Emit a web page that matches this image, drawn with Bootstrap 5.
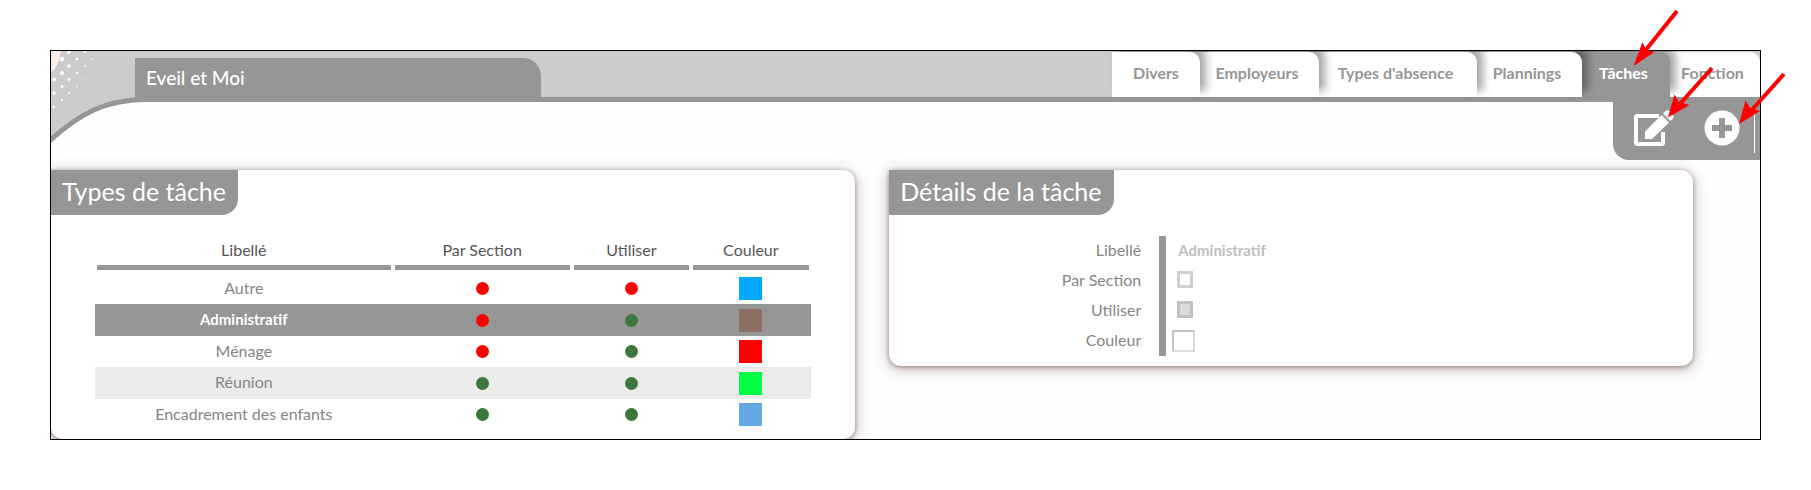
<!DOCTYPE html>
<html lang="fr">
<head>
<meta charset="utf-8">
<meta name="viewport" content="width=device-width, initial-scale=1">
<title>Eveil et Moi - Tâches</title>
<link href="https://cdn.jsdelivr.net/npm/bootstrap@5.3.0/dist/css/bootstrap.min.css" rel="stylesheet">
<style>
:root { --grey: #969696; }
body { font-family: Lato, "Liberation Sans", sans-serif; font-size: 16px; line-height: 24px; color: #858585; background: #fff; }
.app-frame { margin: 50px; border: 1px solid #000; background: #fefefe; }
.app-header { height: 51px; background: #ccc; border-bottom: 5px solid var(--grey); }
.header-art { top: 0; left: 0; width: 96px; height: 96px; }
.site-title { width: 406px; height: 44px; margin: 7px 0 0 84px; padding: 6px 11px; border-radius: 0 18px 0 0; background: var(--grey); color: #fff; font-size: 19px; line-height: 28px; font-weight: 500; }
.tab-strip { padding-top: 1px; }
.tab-item { position: relative; height: 45px; margin-left: -12px; padding: 9px 5px 0 12px; text-align: center; border-radius: 0 10px 0 0; background: #fff; box-shadow: 6px -6px 8px rgba(0,0,0,.35); color: var(--grey); font-size: 16px; font-weight: 700; text-decoration: none; white-space: nowrap; }
.tab-item:first-child { margin-left: 0; padding-left: 5px; }
.tab-item:last-child { box-shadow: none; }
.tab-item.active { background: var(--grey); color: #fff; }
.tab-item:nth-child(1) { z-index: 6; min-width: 88px; }
.tab-item:nth-child(2) { z-index: 5; min-width: 131px; }
.tab-item:nth-child(3) { z-index: 4; min-width: 170px; }
.tab-item:nth-child(4) { z-index: 3; min-width: 117px; }
.tab-item:nth-child(5) { z-index: 2; min-width: 100px; }
.tab-item:nth-child(6) { z-index: 1; min-width: 102px; }
.tool-box { height: 58px; width: 147px; padding: 8px 5px 0 20px; border-radius: 0 0 0 16px; background: var(--grey); }
.tool-btn { border: 0; padding: 0; background: none; line-height: 0; }
.tool-sep { width: 1px; height: 41px; margin: 2px 0 0 14px; background: #fff; }
.panels { padding-top: 10px; gap: 2%; }
.panel { width: 47.05%; border-radius: 0 12px 12px 12px; background: #fff; box-shadow: 0 3px 16px rgba(80,40,30,.3), 0 1px 5px rgba(80,40,30,.5); }
.panel-title { display: inline-block; margin: 0; height: 45px; padding: 0 12px 0 11px; border-radius: 0 0 16px 0; background: var(--grey); color: #fff; font-size: 25px; line-height: 43px; font-weight: 400; vertical-align: top; }
.task-table { width: 89%; margin: 21px 0 9px 44px; table-layout: fixed; text-align: center; }
.task-table th { padding: 0 2px; font-weight: 400; color: #555; height: 37px; vertical-align: top; }
.task-table th span { display: block; height: 34px; padding-top: 2px; border-bottom: 5px solid var(--grey); }
.task-table td { height: 31px; padding: 0; vertical-align: middle; }
.task-table td:first-child { padding-bottom: 2px; }
.task-table tr:nth-child(even) td { height: 32px; background: #ebebeb; }
.task-table tr.chosen:nth-child(even) td { background: var(--grey); color: #fff; font-size: 15px; font-weight: 700; }
.dot, .swatch { display: block; margin: 0 auto; }
.dot { width: 13px; height: 13px; border-radius: 50%; }
.dot-no { background: #f00; }
.dot-yes { background: #3c783c; }
.swatch { width: 23px; height: 23px; }
.details { margin: 21px 0 10px; grid-template-columns: 270px 1fr; }
.detail-labels { border-right: 7px solid var(--grey); margin-right: -7px; padding-right: 18px; text-align: right; }
.detail-labels label { display: block; height: 30px; line-height: 28px; }
.detail-values { padding-left: 13px; }
.detail-values div { height: 30px; display: flex; align-items: center; }
.detail-values input { appearance: none; margin: 0; border-radius: 0; }
.detail-values .field-text { width: 200px; border: 0; padding: 0 0 2px; margin-left: 6px; height: 24px; background: none; color: #bebebe; font-size: 15px; font-weight: 700; }
.detail-values .field-check { width: 16px; height: 17px; margin: 0 0 4px 5px; border: 3px solid #d0d0d0; background: #fff; }
.detail-values .field-check:checked { border-color: #c1c1c1; background: #dadada; }
.detail-values .field-color { width: 23px; height: 22px; padding: 0; border: 2px solid; border-color: #c3c3c3 #dadada #dadada #c3c3c3; background: #fff; }
.arrows { top: 0; right: 0; width: 211px; height: 180px; z-index: 20; pointer-events: none; }
</style>
</head>
<body class="position-relative">
<div class="app-frame position-relative overflow-hidden">
  <header class="app-header d-flex justify-content-between">
    <svg class="header-art position-absolute" viewBox="0 0 96 96" aria-hidden="true">
      <path d="M0 0H84V48Q46 50 0 88Z" fill="#ccc"/>
      <path d="M0 0H10Q8 15 0 22Z" fill="#fbeee8"/>
      <g fill="#fff">
        <circle cx="18" cy="1" r="2"/><circle cx="34" cy="1" r="1.3"/>
        <circle cx="11" cy="8" r="2.2"/><circle cx="26" cy="8" r="1.6"/><circle cx="41.5" cy="8" r=".8"/>
        <circle cx="18" cy="15" r="1.8"/><circle cx="34" cy="15" r=".9"/>
        <circle cx="11" cy="22" r="1.9"/><circle cx="26" cy="22" r="1.2"/>
        <circle cx="3" cy="28.5" r="2"/><circle cx="18" cy="28.5" r="1.4"/><circle cx="34" cy="28.5" r=".6"/>
        <circle cx="11" cy="35.5" r="1.5"/><circle cx="26" cy="35.5" r=".8"/>
        <circle cx="3" cy="42" r="1.7"/><circle cx="18" cy="42" r="1"/>
        <circle cx="11" cy="49" r="1.1"/><circle cx="3" cy="56" r="1.2"/>
      </g>
      <path d="M0 88C30 62 54 49 94 48.5V54H96V96H0Z" fill="#fefefe"/>
      <path d="M-3 91L0 88.5C30 62 54 49 94 48.5" fill="none" stroke="#969696" stroke-width="5"/>
    </svg>
    <div class="site-title position-relative">Eveil et Moi</div>
    <nav class="tab-strip d-flex">
      <a class="tab-item" href="#">Divers</a>
      <a class="tab-item" href="#">Employeurs</a>
      <a class="tab-item" href="#">Types d'absence</a>
      <a class="tab-item" href="#">Plannings</a>
      <a class="tab-item active" href="#" aria-current="page">Tâches</a>
      <a class="tab-item" href="#">Fonction</a>
    </nav>
  </header>
  <div class="d-flex justify-content-end">
    <div class="tool-box d-flex align-items-start">
      <button class="tool-btn" type="button" aria-label="Modifier">
        <svg width="42" height="38" viewBox="0 0 42 38">
          <path d="M26 6H4.500Q3 6 3 7.500V32.500Q3 34 4.500 34H28.500Q30 34 30 32.500V22" fill="none" stroke="#fff" stroke-width="4"/>
          <path d="M12 29V21.500L28.500 5L36 12.500L19 29Z" fill="#fff"/>
          <path d="M30 3.500L32.500 1Q34.500 -.5 36.500 1.500L39.500 4.500Q41.500 6.500 40 8.500L37.500 11Z" fill="#fff"/>
          <path d="M11 22V30H19" fill="none" stroke="#969696" stroke-width="1.500"/>
        </svg>
      </button>
      <button class="tool-btn ms-auto" type="button" aria-label="Ajouter">
        <svg width="36" height="36" viewBox="0 0 36 36">
          <circle cx="18" cy="18" r="17.5" fill="#fff"/>
          <path d="M18 8V28M8 18H28" stroke="#969696" stroke-width="6"/>
        </svg>
      </button>
      <span class="tool-sep"></span>
    </div>
  </div>
  <main class="panels d-flex align-items-start">
    <section class="panel">
      <h2 class="panel-title">Types de tâche</h2>
      <table class="task-table">
        <colgroup><col style="width:41.6%"><col style="width:25%"><col style="width:16.7%"><col style="width:16.7%"></colgroup>
        <thead>
          <tr><th><span>Libellé</span></th><th><span>Par Section</span></th><th><span>Utiliser</span></th><th><span>Couleur</span></th></tr>
        </thead>
        <tbody>
          <tr><td>Autre</td><td><i class="dot dot-no"></i></td><td><i class="dot dot-no"></i></td><td><i class="swatch" style="background:#00a8ff"></i></td></tr>
          <tr class="chosen"><td>Administratif</td><td><i class="dot dot-no"></i></td><td><i class="dot dot-yes"></i></td><td><i class="swatch" style="background:#8d6e63"></i></td></tr>
          <tr><td>Ménage</td><td><i class="dot dot-no"></i></td><td><i class="dot dot-yes"></i></td><td><i class="swatch" style="background:#ff0000"></i></td></tr>
          <tr><td>Réunion</td><td><i class="dot dot-yes"></i></td><td><i class="dot dot-yes"></i></td><td><i class="swatch" style="background:#00ff40"></i></td></tr>
          <tr><td>Encadrement des enfants</td><td><i class="dot dot-yes"></i></td><td><i class="dot dot-yes"></i></td><td><i class="swatch" style="background:#66a8e5"></i></td></tr>
        </tbody>
      </table>
    </section>
    <section class="panel">
      <h2 class="panel-title">Détails de la tâche</h2>
      <form class="details d-grid">
        <div class="detail-labels">
          <label for="libelle">Libellé</label>
          <label for="section">Par Section</label>
          <label for="utiliser">Utiliser</label>
          <label for="couleur">Couleur</label>
        </div>
        <div class="detail-values">
          <div><input class="field-text" id="libelle" type="text" value="Administratif" readonly></div>
          <div><input class="field-check" id="section" type="checkbox"></div>
          <div><input class="field-check" id="utiliser" type="checkbox" checked></div>
          <div><input class="field-color" id="couleur" type="text" readonly></div>
        </div>
      </form>
    </section>
  </main>
</div>
<svg class="arrows position-absolute" viewBox="1600 0 211 180" fill="#f00" stroke="#f00" aria-hidden="true">
  <g stroke-width="4"><path d="M1677 11L1645 51"/><path d="M1712 68L1679 105"/><path d="M1784 74L1750 112"/></g>
  <g stroke="none">
    <path d="M1633.500 66L1642.500 42L1646 50L1654.500 52Z"/>
    <path d="M1668 117.500L1674.500 94.500L1679 102L1689.500 105Z"/>
    <path d="M1739 124L1745.500 100.500L1750 108L1760 111Z"/>
  </g>
</svg>
<script src="https://cdn.jsdelivr.net/npm/bootstrap@5.3.0/dist/js/bootstrap.bundle.min.js"></script>
</body>
</html>
